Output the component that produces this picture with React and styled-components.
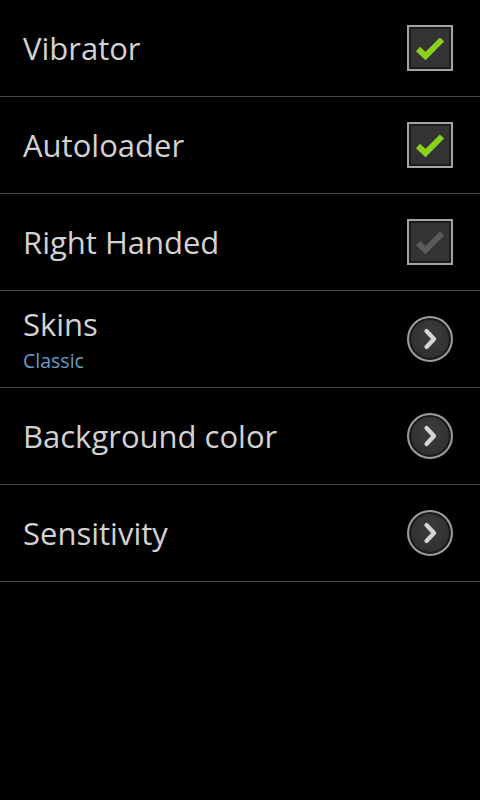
import React from 'react'
import styled, { createGlobalStyle } from 'styled-components'

const GlobalStyle = createGlobalStyle`
  html, body {
    margin: 0;
    padding: 0;
    background: #000;
  }
  body {
    font-family: 'Open Sans', 'DejaVu Sans', sans-serif;
  }
`

const settings = [
  { title: 'Vibrator', type: 'check', checked: true },
  { title: 'Autoloader', type: 'check', checked: true },
  { title: 'Right Handed', type: 'check', checked: false },
  { title: 'Skins', summary: 'Classic', type: 'more' },
  { title: 'Background color', type: 'more' },
  { title: 'Sensitivity', type: 'more' },
]

const CheckBox = ({ checked }) => (
  <Box>
    <svg width="30" height="26" viewBox="0 0 30 26">
      <path
        d="M3 14 L10.5 21 L27 4.5"
        fill="none"
        stroke={checked ? '#8ad01c' : '#5a5a5a'}
        strokeWidth="6"
        strokeLinejoin="miter"
      />
    </svg>
  </Box>
)

const MoreButton = () => (
  <Circle>
    <svg width="20" height="22" viewBox="0 0 20 22">
      <path
        d="M6.5 3 L14 11 L6.5 19"
        fill="none"
        stroke="#d6d6d6"
        strokeWidth="4.2"
        strokeLinecap="round"
        strokeLinejoin="round"
      />
    </svg>
  </Circle>
)

const App = () => (
  <>
    <GlobalStyle />
    <Screen>
      {settings.map((item) => (
        <Row key={item.title}>
          <Texts>
            <Title>{item.title}</Title>
            {item.summary && <Summary>{item.summary}</Summary>}
          </Texts>
          {item.type === 'check' ? <CheckBox checked={item.checked} /> : <MoreButton />}
        </Row>
      ))}
    </Screen>
  </>
)

export default App

const Screen = styled.div`
  width: 480px;
  height: 800px;
  background: #000;
`

const Row = styled.div`
  display: flex;
  align-items: center;
  justify-content: space-between;
  height: 96px;
  padding: 0 27px 0 23px;
  border-bottom: 1px solid #474747;
`

const Texts = styled.div`
  display: flex;
  flex-direction: column;
`

const Title = styled.div`
  color: #d2d2d2;
  font-size: 31px;
  line-height: 40px;
`

const Summary = styled.div`
  color: #6b9cc4;
  font-size: 19.5px;
  line-height: 26px;
  margin-top: 4px;
`

const Box = styled.div`
  width: 46px;
  height: 46px;
  box-sizing: border-box;
  border: 2px solid #a3a3a3;
  box-shadow: inset 0 0 0 2px #1c1c1c;
  background: #333;
  display: flex;
  align-items: center;
  justify-content: center;
`

const Circle = styled.div`
  width: 46px;
  height: 46px;
  box-sizing: border-box;
  border-radius: 50%;
  border: 2px solid #9c9c9c;
  box-shadow: inset 0 0 0 2px #1a1a1a;
  background: radial-gradient(circle at 50% 40%, #3d3d3d, #2a2a2a);
  display: flex;
  align-items: center;
  justify-content: center;
`
